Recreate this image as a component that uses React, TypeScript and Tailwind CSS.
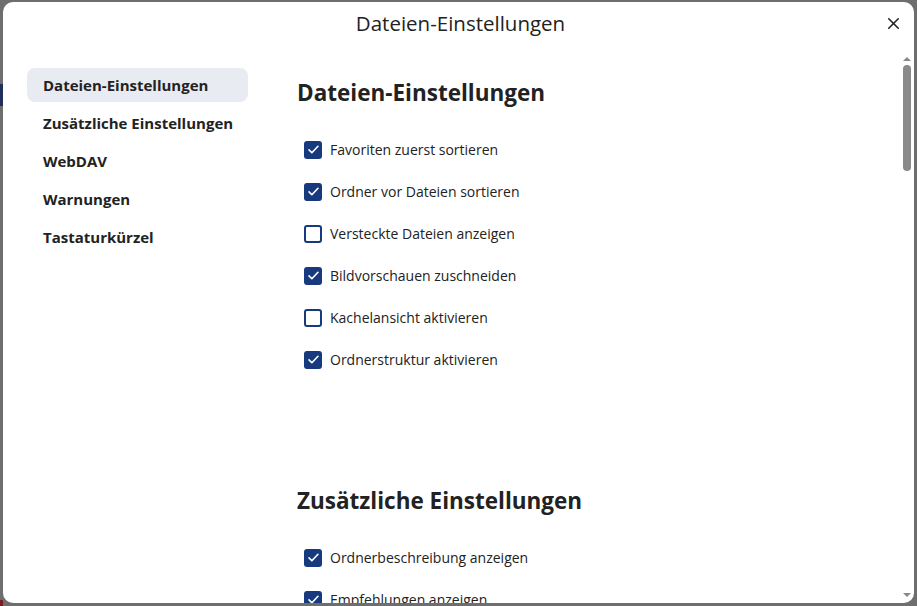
import { X } from 'lucide-react'

const navItems = ['Dateien-Einstellungen', 'Zusätzliche Einstellungen', 'WebDAV', 'Warnungen', 'Tastaturkürzel']

const fileSettings = [
    { label: 'Favoriten zuerst sortieren', checked: true },
    { label: 'Ordner vor Dateien sortieren', checked: true },
    { label: 'Versteckte Dateien anzeigen', checked: false },
    { label: 'Bildvorschauen zuschneiden', checked: true },
    { label: 'Kachelansicht aktivieren', checked: false },
    { label: 'Ordnerstruktur aktivieren', checked: true },
]

const extraSettings = [
    { label: 'Ordnerbeschreibung anzeigen', checked: true },
    { label: 'Empfehlungen anzeigen', checked: true },
]

function Checkbox({ checked }: { checked: boolean }) {
    if (checked) {
        return (
            <span className="flex h-[18px] w-[18px] items-center justify-center rounded-[3px] bg-[#173a7e]">
                <svg width="13" height="13" viewBox="0 0 16 16" fill="none">
                    <path d="M2.5 8.5l3.5 3.5 7.5-8" stroke="white" strokeWidth="2" strokeLinecap="round" strokeLinejoin="round" />
                </svg>
            </span>
        )
    }
    return <span className="h-[18px] w-[18px] rounded-[3px] border-2 border-[#173a7e] bg-white" />
}

function SettingRow({ label, checked }: { label: string; checked: boolean }) {
    return (
        <div className="flex h-[42px] items-center gap-[8px] pl-[7px]">
            <Checkbox checked={checked} />
            <span className="text-[14px] text-[#222]">{label}</span>
        </div>
    )
}

export default function App() {
    return (
        <div className="relative h-[606px] w-[917px] overflow-hidden bg-[#6e6e6e] pt-[2px] pr-[3px] pb-[3px] pl-[3px] font-['Open_Sans',sans-serif]">
            {/* bits of the page behind the backdrop */}
            <div className="absolute left-0 top-[84px] h-[22px] w-[3px] bg-[#1f2f5a]" />
            <div className="absolute bottom-0 left-0 h-[6px] w-[3px] bg-[#7a1f1f]" />

            <div className="relative flex h-full flex-col overflow-hidden rounded-[10px] bg-white">
                <div className="relative flex h-[43px] shrink-0 items-center justify-center">
                    <h1 className="pl-[4px] text-[20.5px] text-[#222]">Dateien-Einstellungen</h1>
                    <button className="absolute right-[10px] top-[10px] flex h-[22px] w-[22px] items-center justify-center text-[#222]">
                        <X className="h-[19px] w-[19px]" strokeWidth={2} />
                    </button>
                </div>

                <div className="flex min-h-0 flex-1">
                    <nav className="flex w-[270px] shrink-0 flex-col pl-[24px] pt-[23px]">
                        {navItems.map((item, i) => (
                            <div
                                key={item}
                                className={`mb-[4px] flex h-[34px] w-[221px] items-center whitespace-nowrap rounded-[8px] px-[16px] text-[15px] font-bold text-[#222] ${i === 0 ? 'bg-[#e8ecf2]' : ''}`}
                            >
                                {item}
                            </div>
                        ))}
                    </nav>

                    <main className="min-w-0 flex-1 overflow-hidden pl-[24px]">
                        <h2 className="mt-[31px] mb-[19px] text-[22.5px] font-bold text-[#222]">Dateien-Einstellungen</h2>
                        {fileSettings.map((s) => (
                            <SettingRow key={s.label} {...s} />
                        ))}
                        <h2 className="mt-[103px] mb-[19px] text-[22.5px] font-bold text-[#222]">Zusätzliche Einstellungen</h2>
                        {extraSettings.map((s) => (
                            <SettingRow key={s.label} {...s} />
                        ))}
                    </main>
                </div>

                {/* scrollbar */}
                <div className="absolute right-[2px] top-[55px] bottom-[2px] flex w-[10px] flex-col items-center">
                    <span className="h-0 w-0 border-x-[4px] border-b-[4px] border-x-transparent border-b-[#888]" />
                    <span className="mt-[4px] h-[106px] w-[8px] rounded-full bg-[#8a8a8a]" />
                    <span className="mt-auto mb-[4px] h-0 w-0 border-x-[4px] border-t-[4px] border-x-transparent border-t-[#888]" />
                </div>
            </div>
        </div>
    )
}
